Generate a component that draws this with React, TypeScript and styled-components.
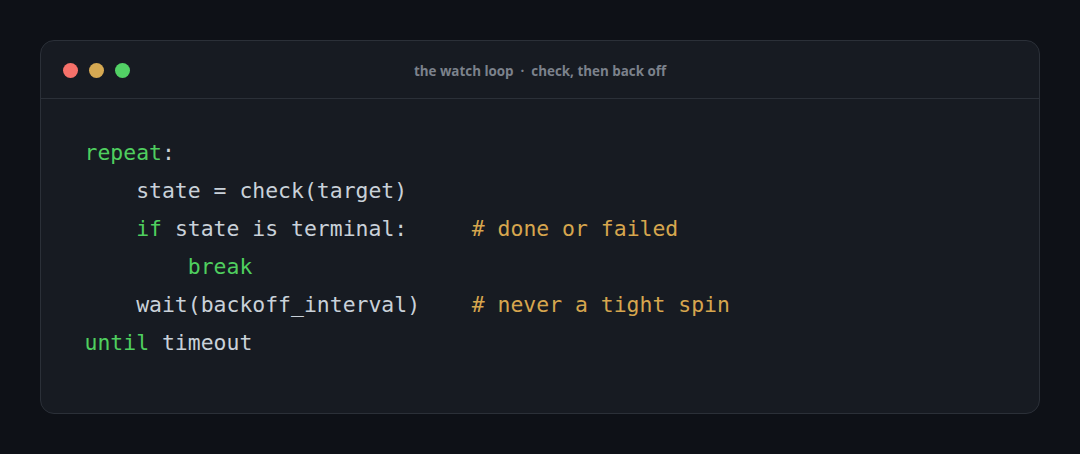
import React from "react";
import styled, { createGlobalStyle } from "styled-components";

const Global = createGlobalStyle`
  html, body { margin: 0; padding: 0; background: #0e1117; }
  body { width: 1080px; height: 454px; overflow: hidden; }
`;

const Page = styled.div`
  padding: 40px;
  box-sizing: border-box;
  width: 1080px;
  height: 454px;
`;

const Card = styled.div`
  box-sizing: border-box;
  width: 1000px;
  height: 374px;
  background: #171b22;
  border: 1px solid #2b3038;
  border-radius: 14px;
  display: flex;
  flex-direction: column;
  overflow: hidden;
`;

const Header = styled.div`
  position: relative;
  height: 57px;
  display: flex;
  align-items: center;
  justify-content: center;
  border-bottom: 1px solid #2b3038;
  box-sizing: content-box;
`;

const Dots = styled.div`
  position: absolute;
  left: 22px;
  top: 22px;
  display: flex;
  gap: 11px;
`;

const Dot = styled.span<{ $c: string }>`
  width: 15px;
  height: 15px;
  border-radius: 50%;
  background: ${(p) => p.$c};
`;

const Title = styled.div`
  font-family: "Open Sans", "DejaVu Sans", sans-serif;
  font-weight: 700;
  font-size: 13.4px;
  color: #7c828c;
  margin-top: 3px;
`;

const Code = styled.pre`
  margin: 0;
  padding: 35px 44px 0 43.5px;
  font-family: "DejaVu Sans Mono", monospace;
  font-size: 21.45px;
  line-height: 38px;
  color: #c9d1d9;
`;

const Kw = styled.span`
  color: #4fcf5f;
`;

const Cm = styled.span`
  color: #d6a64e;
`;

export default function App() {
  return (
    <Page>
      <Global />
      <Card>
        <Header>
          <Dots>
            <Dot $c="#f6716a" />
            <Dot $c="#d6a952" />
            <Dot $c="#52d165" />
          </Dots>
          <Title>the watch loop&nbsp; · &nbsp;check, then back off</Title>
        </Header>
        <Code>
          <Kw>repeat</Kw>:{"\n"}
          {"    "}state = check(target){"\n"}
          {"    "}<Kw>if</Kw> state is terminal:{"     "}<Cm># done or failed</Cm>{"\n"}
          {"        "}<Kw>break</Kw>{"\n"}
          {"    "}wait(backoff_interval){"    "}<Cm># never a tight spin</Cm>{"\n"}
          <Kw>until</Kw> timeout
        </Code>
      </Card>
    </Page>
  );
}
